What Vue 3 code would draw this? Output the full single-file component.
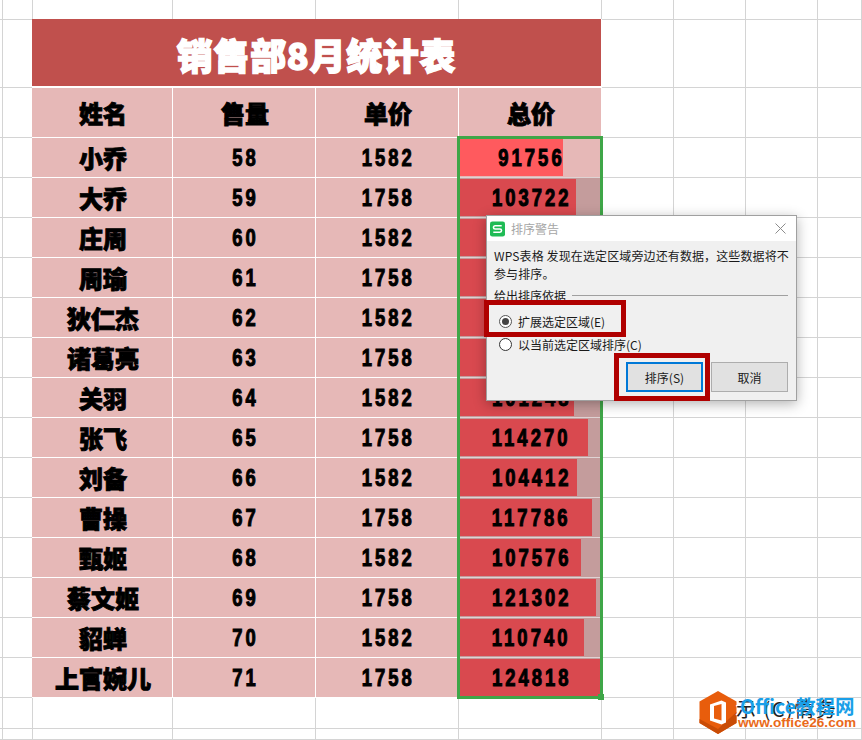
<script setup>
import { computed } from 'vue';

const colWidths = [3, 30, 140, 143, 143, 143, 72, 72, 72, 44];
const rowHeights = [20, 68, 50, ...Array(14).fill(40), 31, 11];

const gridCells = computed(() => {
  const cells = [];
  rowHeights.forEach((_, r) => {
    colWidths.forEach((_, c) => {
      cells.push({ key: `${r}-${c}`, area: `${r + 1} / ${c + 1}` });
    });
  });
  return cells;
});

const sheetStyle = {
  gridTemplateColumns: colWidths.map(w => `${w}px`).join(' '),
  gridTemplateRows: rowHeights.map(h => `${h}px`).join(' ')
};

const people = [
  ['小乔', 58, 1582], ['大乔', 59, 1758], ['庄周', 60, 1582], ['周瑜', 61, 1758],
  ['狄仁杰', 62, 1582], ['诸葛亮', 63, 1758], ['关羽', 64, 1582], ['张飞', 65, 1758],
  ['刘备', 66, 1582], ['曹操', 67, 1758], ['甄姬', 68, 1582], ['蔡文姬', 69, 1758],
  ['貂蝉', 70, 1582], ['上官婉儿', 71, 1758]
];

const rows = people.map(([name, qty, price]) => ({
  name, qty, price, total: qty * price
}));

const maxTotal = 124818;
const barWidth = (total) => `${Math.round((total / maxTotal) * 140)}px`;
</script>

<template>
  <div class="page">
    <div class="sheet" :style="sheetStyle">
      <div v-for="cell in gridCells" :key="cell.key" class="grid-cell" :style="{ gridArea: cell.area }"></div>

      <div class="report">
        <div class="title-wrap"><div class="title">销售部8月统计表</div></div>
        <div class="cell head">姓名</div>
        <div class="cell head">售量</div>
        <div class="cell head">单价</div>
        <div class="cell head">总价</div>
        <template v-for="(row, i) in rows" :key="row.name">
          <div class="cell name">{{ row.name }}</div>
          <div class="cell num"><span class="digits">{{ row.qty }}</span></div>
          <div class="cell num"><span class="digits">{{ row.price }}</span></div>
          <div class="cell num total" :class="{ active: i === 0 }">
            <span class="bar" :style="{ width: barWidth(row.total) }"></span>
            <span class="digits">{{ row.total }}</span>
          </div>
        </template>
      </div>
    </div>

    <div class="selection"><span class="handle"></span></div>

    <div class="dialog">
      <div class="dialog-title">
        <svg class="wps" viewBox="0 0 16 16">
          <rect width="16" height="16" rx="2.5" fill="#1fbb55" />
          <path d="M12.5 4.6H5.4a1.7 1.7 0 0 0 0 3.4h5.2a1.7 1.7 0 0 1 0 3.4H3.5" fill="none" stroke="#fff" stroke-width="1.7" />
        </svg>
        <span class="dialog-name">排序警告</span>
        <svg class="close" viewBox="0 0 11 11">
          <path d="M0.5 0.5L10.5 10.5M10.5 0.5L0.5 10.5" stroke="#8c8c8c" stroke-width="1" fill="none" />
        </svg>
      </div>
      <div class="dialog-body">
        <p class="message">WPS表格 发现在选定区域旁边还有数据，这些数据将不参与排序。</p>
        <div class="legend"><span>给出排序依据</span><i></i></div>
        <div class="radio-row first"><span class="radio on"></span>扩展选定区域(E)</div>
        <div class="radio-row"><span class="radio"></span>以当前选定区域排序(C)</div>
        <div class="buttons">
          <button class="btn primary">排序(S)</button>
          <button class="btn">取消</button>
        </div>
      </div>
      <div class="mark mark-radio"></div>
      <div class="mark mark-button"></div>
    </div>

    <div class="watermark">
      <svg class="hex" viewBox="0 0 38 43">
        <path d="M19 0L37.5 10.5V32L19 43L0.5 32V10.5Z" fill="#e85d0c" />
        <path d="M37.5 21V32L19 43L0.5 32V28L19 38Z" fill="#c94c06" />
        <path d="M22.5 9.5L11 13.5V29.5L22.5 33.5L27 31.5V11.5Z" fill="#fff" />
        <path d="M22.5 13L15 15V27.5L22.5 29.5Z" fill="#e85d0c" />
      </svg>
      <div class="ghost">示 (C)情务</div>
      <div class="brand">Office教程网</div>
      <div class="url">www.office26.com</div>
    </div>
  </div>
</template>

<style>
html,
body {
  margin: 0;
  background: #fff;
}
</style>

<style scoped>
.page {
  position: relative;
  width: 862px;
  height: 740px;
  overflow: hidden;
  background: #fff;
  font-family: "Noto Sans CJK SC", "Liberation Sans", sans-serif;
}

.sheet {
  display: grid;
}

.grid-cell {
  box-sizing: border-box;
  border-right: 1px solid #d4d4d4;
  border-bottom: 1px solid #d4d4d4;
}

.report {
  grid-area: 2 / 3 / 17 / 7;
  margin: -1px 0 0 -1px;
  display: grid;
  grid-template-columns: 141px 143px 143px 143px;
  grid-template-rows: 69px 50px repeat(14, 40px);
  z-index: 1;
}

.title-wrap {
  grid-column: 1 / -1;
  background: #fff;
  padding-right: 1px;
}

.title {
  box-sizing: border-box;
  height: 67px;
  padding-top: 3px;
  background: #c0504d;
  color: #fff;
  display: flex;
  align-items: center;
  justify-content: center;
  font-size: 36px;
  font-weight: 900;
  -webkit-text-stroke: 1.4px #fff;
  letter-spacing: 0.7px;
  line-height: 1;
}

.cell {
  box-sizing: border-box;
  display: flex;
  align-items: center;
  justify-content: center;
  background: #e6b8b7;
  border-right: 1px solid #fff;
  border-bottom: 1px solid #fff;
  color: #000;
  font-weight: 900;
  line-height: 1;
}

.head {
  font-size: 24px;
  -webkit-text-stroke: 0.9px #000;
  padding-left: 2px;
}

.name {
  font-size: 24px;
  -webkit-text-stroke: 0.9px #000;
  padding: 1px 0 0 2px;
  white-space: nowrap;
}

.num {
  font-family: "Liberation Sans", sans-serif;
  font-size: 23px;
  font-weight: 700;
  letter-spacing: 3.8px;
  -webkit-text-stroke: 1px #000;
  padding: 2px 0 0 3px;
}

.digits {
  position: relative;
  display: inline-block;
  transform: scaleX(0.8);
}

.total {
  position: relative;
  background: #c49c9c;
  border-bottom-color: #dfd3d3;
  border-right-color: #c49c9c;
}

.total.active {
  background: #e6b8b7;
}

.bar {
  position: absolute;
  left: 1px;
  top: 1px;
  bottom: 1px;
  background: #d9494f;
}

.active .bar {
  background: #ff5a5e;
}

.selection {
  position: absolute;
  left: 457px;
  top: 136px;
  width: 146px;
  height: 563px;
  box-sizing: border-box;
  border: 3px solid #3fa648;
  z-index: 2;
}

.handle {
  position: absolute;
  right: -4px;
  bottom: -4px;
  width: 6px;
  height: 6px;
  background: #3fa648;
}

.dialog {
  position: absolute;
  left: 486px;
  top: 215px;
  width: 311px;
  height: 186px;
  box-sizing: border-box;
  border: 1px solid #a0a0a0;
  background: #f0f0f0;
  box-shadow: 0 3px 12px rgba(0, 0, 0, 0.3);
  z-index: 3;
  font-size: 12px;
  color: #1a1a1a;
}

.dialog-title {
  height: 25px;
  display: flex;
  align-items: center;
  background: #fff;
  padding: 0 10px 0 3px;
}

.wps {
  width: 15px;
  height: 16px;
}

.dialog-name {
  margin-left: 6px;
  font-size: 12px;
  color: #a6a6a6;
}

.close {
  width: 11px;
  height: 11px;
  margin-left: auto;
}

.dialog-body {
  padding: 6px 8px 0 7px;
}

.message {
  margin: 0;
  line-height: 18px;
  letter-spacing: 0.12px;
  width: 297px;
}

.legend {
  display: flex;
  align-items: center;
  gap: 6px;
  margin-top: 3px;
  height: 18px;
}

.legend i {
  flex: 1;
  height: 1px;
  background: #a0a0a0;
}

.radio-row {
  display: flex;
  align-items: center;
  gap: 6px;
  height: 23px;
  padding-left: 5px;
  line-height: 1;
}

.radio-row.first {
  margin-top: 6px;
}

.radio {
  box-sizing: border-box;
  width: 13px;
  height: 13px;
  border: 1px solid #333;
  border-radius: 50%;
  background: #fff;
  display: flex;
  align-items: center;
  justify-content: center;
}

.radio.on {
  border-color: #555;
}

.radio.on::after {
  content: '';
  width: 7px;
  height: 7px;
  border-radius: 50%;
  background: #444;
}

.buttons {
  display: flex;
  justify-content: flex-end;
  gap: 8px;
  margin-top: 6px;
}

.btn {
  box-sizing: border-box;
  width: 77px;
  height: 30px;
  background: #e1e1e1;
  border: 1px solid #adadad;
  font: inherit;
  font-size: 12px;
  color: #1a1a1a;
  padding: 0;
}

.btn.primary {
  border: 2px solid #0078d7;
}

.mark {
  position: absolute;
  box-sizing: border-box;
  border: 5px solid #b00000;
}

.mark-radio {
  left: -3px;
  top: 84px;
  width: 142px;
  height: 37px;
}

.mark-button {
  left: 127px;
  top: 137px;
  width: 96px;
  height: 48px;
}

.watermark {
  position: absolute;
  left: 699px;
  top: 691px;
  width: 163px;
  height: 44px;
  z-index: 4;
}

.hex {
  position: absolute;
  left: 0;
  top: 0;
  width: 38px;
  height: 43px;
}

.ghost {
  position: absolute;
  left: 37px;
  top: 7px;
  font-size: 20px;
  line-height: 22px;
  letter-spacing: 1.5px;
  color: #222;
  white-space: nowrap;
  text-shadow: 1px 1px 0 #fff, -1px -1px 0 #fff;
}

.brand {
  position: absolute;
  left: 41px;
  top: 2px;
  font-size: 19.5px;
  line-height: 26px;
  font-weight: 700;
  color: #1a9fe8;
  white-space: nowrap;
}

.url {
  position: absolute;
  left: 39px;
  top: 24px;
  font-family: "Liberation Sans", sans-serif;
  font-size: 13.6px;
  line-height: 16px;
  font-weight: 700;
  color: #ea6a1a;
  white-space: nowrap;
}
</style>
